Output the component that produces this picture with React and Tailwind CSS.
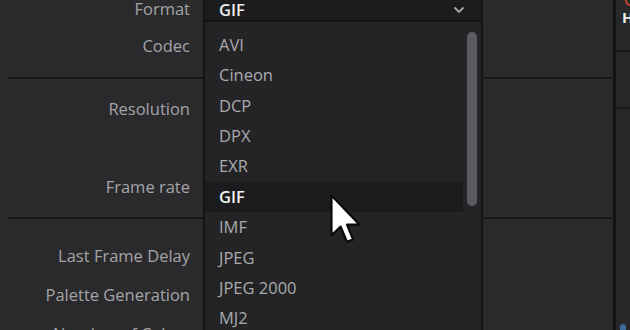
import React from "react";

const items = ["AVI", "Cineon", "DCP", "DPX", "EXR", "GIF", "IMF", "JPEG", "JPEG 2000", "MJ2"];

function Cursor() {
  return (
    <svg
      className="absolute left-[329px] top-[193px]"
      width="34"
      height="52"
      viewBox="-1 -1 14 21.5"
    >
      <path
        d="M0 0 L0 16.5 L3.8 12.9 L6.4 19.2 L8.9 18.2 L6.4 12.1 L11.6 12.1 Z"
        fill="#ffffff"
        stroke="#0a0a0a"
        strokeWidth="0.9"
        strokeLinejoin="round"
      />
    </svg>
  );
}

export default function App() {
  return (
    <div className="relative flex h-[330px] w-[630px] overflow-hidden bg-[#2a2a2d] font-['Open_Sans',sans-serif] text-[16.5px] text-[#a4a4a7]">
      {/* main settings area */}
      <div className="flex w-[613px] shrink-0 flex-col pl-2">
        <div className="flex h-[79px] shrink-0 flex-col border-b-2 border-[#18181a]">
          <div className="flex h-[18px] w-[182px] items-center justify-end">Format</div>
          <div className="flex h-[56px] w-[182px] items-center justify-end">Codec</div>
        </div>
        <div className="flex h-[140px] shrink-0 flex-col border-b-2 border-[#18181a] pt-[18px]">
          <div className="flex h-6 w-[182px] items-center justify-end">Resolution</div>
          <div className="mt-[54px] flex h-6 w-[182px] items-center justify-end">Frame rate</div>
        </div>
        <div className="flex shrink-0 flex-col pt-[25px]">
          <div className="flex h-6 w-[182px] items-center justify-end">Last Frame Delay</div>
          <div className="mt-[15px] flex h-6 w-[182px] items-center justify-end">Palette Generation</div>
          <div className="mt-[15px] flex h-6 w-[182px] items-center justify-end">Number of Colors</div>
        </div>
      </div>

      {/* right panel separator */}
      <div className="w-[3px] shrink-0 bg-[#141416]" />

      {/* right panel */}
      <div className="relative flex flex-1 flex-col bg-[#28282b]">
        <div className="h-[52px] shrink-0 border-b-2 border-[#1a1a1c] pl-[6px]">
          <div className="ml-[3px] mt-[-5px] h-[11px] w-[11px] rounded-full border-2 border-[#c4452f]" />
          <div className="mt-[4px] text-[15px] font-bold leading-none text-[#ececec]">H</div>
        </div>
        <div className="h-[57px] shrink-0 border-b-2 border-[#1a1a1c]" />
        <div className="flex-1" />
        <div className="mb-[-2px] ml-[4px] h-[8px] w-[6px] rounded-sm bg-[#3d6a9c]" />
      </div>

      {/* dropdown */}
      <div className="absolute left-[203px] top-0 flex h-full w-[280px] flex-col border-x-2 border-[#141416] bg-[#242427]">
        <div className="flex h-[20px] shrink-0 items-center justify-between bg-[#1c1c1e] pl-[14px] pr-[16px]">
          <span className="font-semibold text-[#ebebeb]">GIF</span>
          <svg width="12" height="8" viewBox="0 0 12 8">
            <path d="M1.5 1.5 L6 6 L10.5 1.5" fill="none" stroke="#a8a8ab" strokeWidth="1.8" />
          </svg>
        </div>
        <div className="h-[2px] shrink-0 bg-[#141416]" />
        <div className="relative flex-1 pt-2">
          {items.map((it) => (
            <div
              key={it}
              className={
                it === "GIF"
                  ? "mr-[18px] flex h-[30.4px] shrink-0 items-center bg-[#1c1c1e] pl-[14px] font-semibold text-[#f0f0f0]"
                  : "mr-[18px] flex h-[30.4px] shrink-0 items-center pl-[14px] text-[#aaaaad]"
              }
            >
              {it}
            </div>
          ))}
          <div className="absolute right-[4px] top-[10px] h-[174px] w-[10px] rounded-full bg-[#5b5b5f]" />
        </div>
      </div>

      <Cursor />
    </div>
  );
}
